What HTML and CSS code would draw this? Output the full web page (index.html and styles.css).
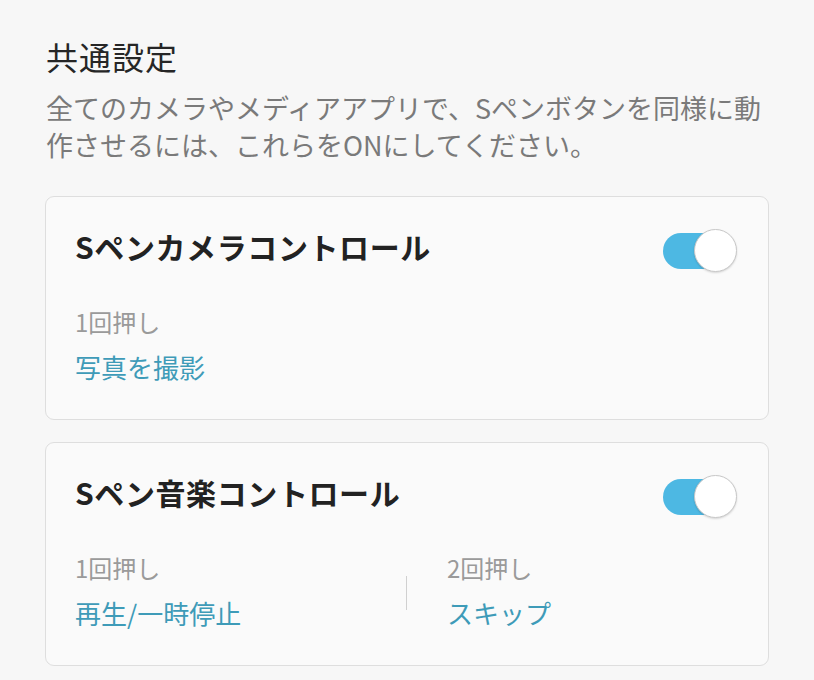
FILE: index.html
```html
<!DOCTYPE html>
<html lang="ja">
<head>
  <meta charset="UTF-8" />
  <title>Sペン設定</title>
  <link rel="stylesheet" href="styles.css">
</head>
<body>

  <h2 class="section-title">共通設定</h2>
  <p class="section-desc">全てのカメラやメディアアプリで、Sペンボタンを同様に動作させるには、これらをONにしてください。</p>

  <div class="card">
    <div class="card-head">
      <div class="card-title">Sペンカメラコントロール</div>
      <div class="switch on"><span class="knob"></span></div>
    </div>
    <div class="actions">
      <div class="action">
        <div class="action-label">1回押し</div>
        <div class="action-value">写真を撮影</div>
      </div>
    </div>
  </div>

  <div class="card">
    <div class="card-head">
      <div class="card-title">Sペン音楽コントロール</div>
      <div class="switch on"><span class="knob"></span></div>
    </div>
    <div class="actions two">
      <div class="action">
        <div class="action-label">1回押し</div>
        <div class="action-value">再生/一時停止</div>
      </div>
      <div class="divider"></div>
      <div class="action">
        <div class="action-label">2回押し</div>
        <div class="action-value">スキップ</div>
      </div>
    </div>
  </div>

</body>
</html>
```

FILE: styles.css
```css
* {
  box-sizing: border-box;
  margin: 0;
  padding: 0;
}
body {
  font-family: 'Noto Sans CJK JP', 'Noto Sans', sans-serif;
  background: #f7f7f7;
  padding: 35px 45px 0 45px;
  color: #222;
}

/* Section header */
.section-title {
  font-size: 32px;
  font-weight: 400;
  line-height: 42px;
  letter-spacing: 1px;
  color: #262626;
  padding-left: 1px;
}
.section-desc {
  margin-top: 12px;
  font-size: 27px;
  line-height: 37px;
  color: #7a7a7a;
  padding-left: 1px;
}

/* Cards */
.card {
  margin-top: 33px;
  width: 724px;
  height: 224px;
  background: #fafafa;
  border: 1px solid #dedede;
  border-radius: 9px;
  padding: 26px 32px 0 29px;
}
.card + .card {
  margin-top: 22px;
}
.card-head {
  display: flex;
  align-items: center;
  justify-content: space-between;
  height: 54px;
}
.card-title {
  font-size: 30px;
  font-weight: 700;
  letter-spacing: 0.6px;
  color: #222;
  margin-bottom: 8px;
}

/* Toggle switch */
.switch {
  position: relative;
  width: 74px;
  height: 43px;
  margin-right: -1px;
}
.switch::before {
  content: "";
  position: absolute;
  left: 0;
  top: 4px;
  width: 66px;
  height: 36px;
  border-radius: 18px;
  background: #4db8e3;
}
.switch .knob {
  position: absolute;
  right: 0;
  top: 0;
  width: 43px;
  height: 43px;
  border-radius: 50%;
  background: #fff;
  border: 1px solid #c8c8c8;
  box-shadow: 0 1px 2px rgba(0, 0, 0, 0.15);
}

/* Actions */
.actions {
  margin-top: 28px;
}
.actions.two {
  display: grid;
  grid-template-columns: 291px 1px auto;
  column-gap: 40px;
  align-items: center;
}
.action-label {
  font-size: 24px;
  line-height: 34px;
  color: #9a9a9a;
}
.action-value {
  margin-top: 10px;
  font-size: 26px;
  line-height: 36px;
  color: #3e9bb8;
}
.divider {
  width: 1px;
  height: 34px;
  background: #d0d0d0;
  margin-top: 4px;
}
```
